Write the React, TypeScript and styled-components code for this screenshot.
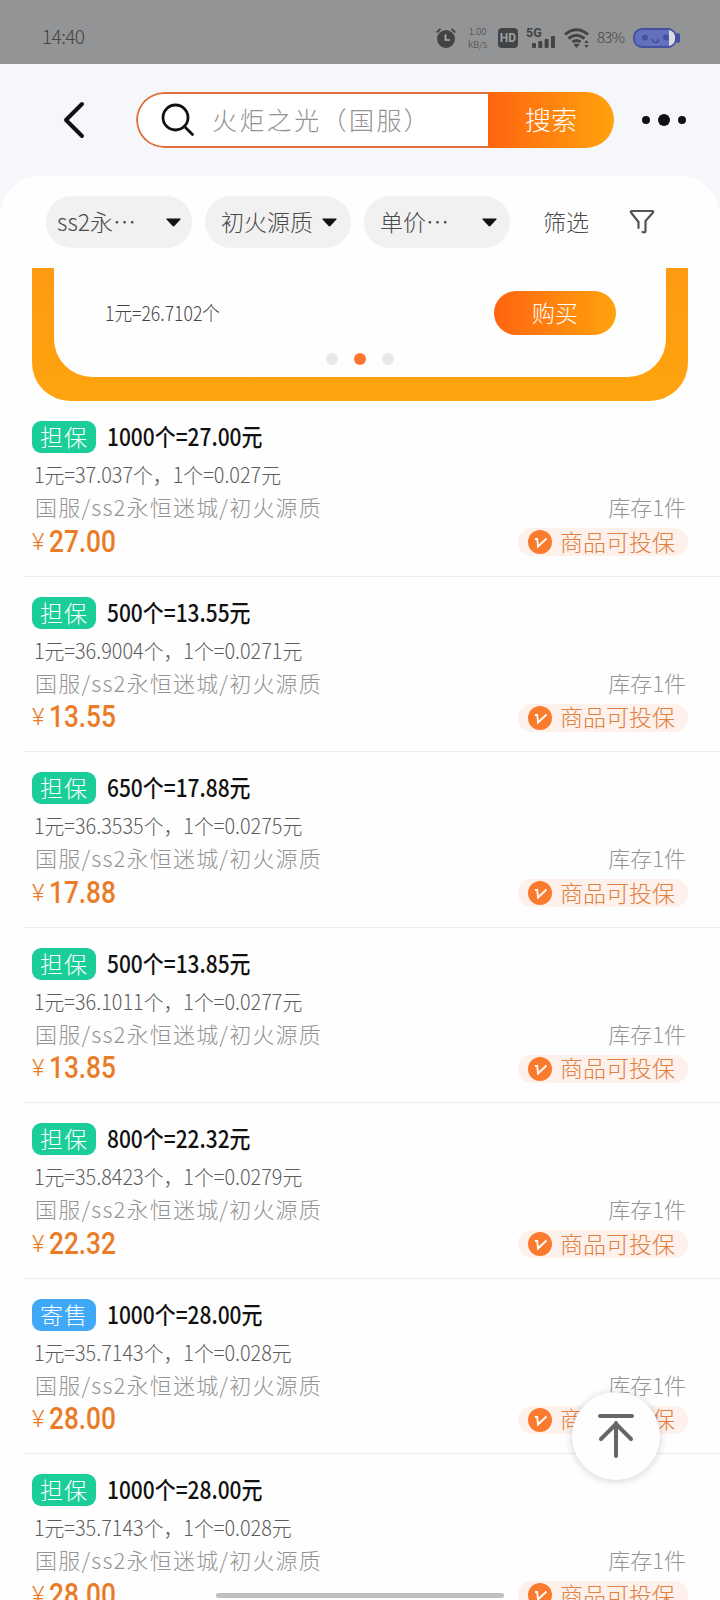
import React from 'react';
import styled, { createGlobalStyle } from 'styled-components';

const Global = createGlobalStyle`
  * { box-sizing: border-box; }
  html, body { margin: 0; padding: 0; background: #fefefe; overflow: hidden; }
  body { font-family: 'Noto Sans CJK SC', sans-serif; font-weight: 300; }
`;

const Screen = styled.div`
  position: relative;
  width: 720px;
  height: 1600px;
  overflow: hidden;
  background: #f5f7fb;
`;

const StatusBar = styled.div`
  height: 64px;
  background: #939495;
  color: #444;
  display: flex;
  align-items: center;
  padding: 12px 39px 0 42px;
`;
const Clock = styled.span`
  flex: 1;
  margin-top: -4px;
  font-size: 19px;
  line-height: 24px;
  letter-spacing: -0.6px;
`;
const StatusIcon = styled.svg<{ $gap: number }>`
  display: block;
  flex: none;
  margin-right: ${(p) => p.$gap}px;
`;
const Speed = styled.div`
  width: 21px;
  margin-right: 10px;
  font-size: 9.5px;
  line-height: 13px;
  text-align: center;
  white-space: nowrap;
`;
const HdBadge = styled.div`
  width: 20px;
  height: 20px;
  margin-right: 8px;
  border-radius: 4px;
  background: #424344;
  color: #a0a1a2;
  font: 700 12px/20px Roboto, sans-serif;
  text-align: center;
`;
const Signal = styled.div`
  display: flex;
  width: 30px;
  height: 20px;
  margin-right: 8px;
  font: 700 12.5px/10px Roboto, sans-serif;
`;
const Bars = styled.svg`
  flex: none;
  align-self: flex-end;
  margin-left: -10px;
`;
const Percent = styled.span`
  width: 27px;
  margin: -3px 9px 0 0;
  font-size: 15px;
  letter-spacing: -0.8px;
  white-space: nowrap;
`;

const Header = styled.header`
  height: 112px;
  display: flex;
  align-items: center;
  padding-left: 62px;
`;
const BackIcon = styled.svg`
  width: 24px;
  margin-right: 50px;
`;
const SearchBox = styled.div`
  display: flex;
  width: 478px;
  height: 56px;
  border-radius: 28px;
  overflow: hidden;
`;
const SearchField = styled.div`
  width: 352px;
  display: flex;
  align-items: center;
  padding: 0 0 2px 23px;
  border: 2px solid #e1703f;
  border-right: 0;
  border-radius: 28px 0 0 28px;
  background: #fff;
  color: #929292;
  font-size: 25px;
  letter-spacing: 2.4px;
  white-space: nowrap;
`;
const SearchIcon = styled.svg`
  flex: none;
  margin: 2px 17px 0 0;
`;
const SearchButton = styled.div`
  flex: 1;
  background: linear-gradient(90deg, #ff6411, #ffa30c);
  color: #fff;
  font-size: 26px;
  line-height: 54px;
  text-align: center;
`;
const MoreIcon = styled.svg`
  margin-left: 26px;
`;

const Sheet = styled.main`
  height: 1424px;
  border-radius: 40px 40px 0 0;
  background: #fefefe;
`;
const Filters = styled.div`
  height: 92px;
  display: flex;
  align-items: flex-start;
  padding: 20px 0 0 46px;
`;
const Pill = styled.div<{ $left: number; $right?: number }>`
  width: 146px;
  height: 52px;
  margin-right: 13px;
  padding: 0 ${(p) => p.$right ?? 11}px 0 ${(p) => p.$left}px;
  border-radius: 26px;
  background: #f1f1f1;
  color: #4a4a4a;
  display: flex;
  align-items: center;
  justify-content: space-between;
  font-size: 23px;
  line-height: 48px;
  white-space: nowrap;

  span {
    margin-top: -2px;
  }
`;
const FilterLink = styled.div`
  display: flex;
  align-items: center;
  height: 52px;
  padding-left: 20px;
  gap: 40px;
  color: #4a4a4a;
  font-size: 23px;

  span {
    margin-top: -2px;
  }
`;

const Banner = styled.section`
  height: 133px;
  margin: 0 32px;
  padding: 0 22px 24px;
  border-radius: 0 0 38px 38px;
  background: linear-gradient(#ff9b12, #ffa40e);
`;
const BannerCard = styled.div`
  height: 109px;
  padding: 23px 50px 0 51px;
  border-radius: 0 0 38px 38px;
  background: #fefefe;
`;
const BannerRow = styled.div`
  display: flex;
  align-items: center;
  justify-content: space-between;
  color: #444;
  font-size: 20px;
`;
const BannerRate = styled.span`
  margin-top: -2px;
  transform: scaleX(0.88);
  transform-origin: left;
`;
const BuyButton = styled.div`
  width: 122px;
  height: 44px;
  border-radius: 22px;
  background: linear-gradient(90deg, #ff6411, #ffa30c);
  color: #fff;
  font-size: 23px;
  line-height: 42px;
  text-align: center;
`;
const Dots = styled.div`
  display: flex;
  justify-content: center;
  gap: 16px;
  padding: 18px 1px 0 0;
`;
const Dot = styled.i<{ $active?: boolean }>`
  width: 12px;
  height: 12px;
  border-radius: 50%;
  background: ${(p) => (p.$active ? '#fa7530' : '#e8e8e8')};
`;

const Item = styled.article`
  height: 175.5px;
  margin-left: 24px;
  padding: 20px 32px 0 8px;
  border-bottom: 1.5px solid #ededed;
  white-space: nowrap;
`;
const TitleRow = styled.div`
  display: flex;
  align-items: center;
  height: 32px;
  gap: 11px;
`;
const Badge = styled.span<{ $blue?: boolean }>`
  width: 64px;
  height: 32px;
  border-radius: 9px;
  background: ${(p) => (p.$blue ? '#3fa9f8' : '#1bcd98')};
  color: #fff;
  font-size: 23px;
  line-height: 30px;
  letter-spacing: 1px;
  text-align: center;
`;
const Title = styled.span`
  margin-top: -2px;
  color: #111;
  font-size: 24px;
  line-height: 32px;
  font-weight: 500;
  transform: scaleX(0.872);
  transform-origin: left;
`;
const Rate = styled.div`
  height: 32px;
  margin-top: 5px;
  padding-left: 2px;
  color: #5b5b5b;
  font-size: 21px;
  line-height: 32px;
  transform: scaleX(0.945);
  transform-origin: left;
`;
const MetaRow = styled.div`
  display: flex;
  justify-content: space-between;
  height: 32px;
  padding: 0 2px 0 3px;
  color: #949494;
  font-size: 22px;
  line-height: 32px;
`;
const Category = styled.span`
  letter-spacing: 1.2px;
`;
const PriceRow = styled.div`
  display: flex;
  align-items: center;
  justify-content: space-between;
  height: 40px;
`;
const Price = styled.div`
  display: flex;
  align-items: baseline;
  gap: 5px;
  color: #ea7c28;
  font: 500 32px/38px Roboto, sans-serif;
`;
const Yen = styled.span`
  width: 12px;
  font-size: 24px;
  font-weight: 300;
  transform: translateY(-2px);
`;
const Amount = styled.span`
  transform: scaleX(0.82);
  transform-origin: left;
`;
const Insured = styled.div`
  display: flex;
  align-items: center;
  width: 170px;
  height: 28px;
  padding-left: 10px;
  gap: 8px;
  border-radius: 14px;
  background: #fef0ea;
  color: #df8142;
  font-size: 23px;
  line-height: 24px;

  span {
    margin-top: -3px;
  }
`;

const TopButton = styled.div`
  position: absolute;
  left: 572px;
  top: 1392px;
  width: 88px;
  height: 88px;
  border-radius: 50%;
  background: #fefefe;
  box-shadow: 0 1px 8px rgba(0, 0, 0, 0.18);
`;
const HomeBar = styled.div`
  position: absolute;
  left: 216px;
  top: 1593px;
  width: 288px;
  height: 5px;
  border-radius: 3px;
  background: #bfbfbf;
`;

const Caret = () => (
  <svg width="15" height="9" viewBox="0 0 15 9">
    <path d="M1 .5h13q1 0 .4.900L8.400 8q-.900.900-1.800 0L.600 1.400Q0 .5 1 .5z" fill="#111" />
  </svg>
);

type Listing = { amount: string; price: string; per: string; unit: string; consigned?: boolean };

const listings: Listing[] = [
  { amount: '1000', price: '27.00', per: '37.037', unit: '0.027' },
  { amount: '500', price: '13.55', per: '36.9004', unit: '0.0271' },
  { amount: '650', price: '17.88', per: '36.3535', unit: '0.0275' },
  { amount: '500', price: '13.85', per: '36.1011', unit: '0.0277' },
  { amount: '800', price: '22.32', per: '35.8423', unit: '0.0279' },
  { amount: '1000', price: '28.00', per: '35.7143', unit: '0.028', consigned: true },
  { amount: '1000', price: '28.00', per: '35.7143', unit: '0.028' },
];

const ListingItem = ({ amount, price, per, unit, consigned }: Listing) => (
  <Item>
    <TitleRow>
      <Badge $blue={consigned}>{consigned ? '寄售' : '担保'}</Badge>
      <Title>{`${amount}个=${price}元`}</Title>
    </TitleRow>
    <Rate>{`1元=${per}个，1个=${unit}元`}</Rate>
    <MetaRow>
      <Category>国服/ss2永恒迷城/初火源质</Category>
      <span>库存1件</span>
    </MetaRow>
    <PriceRow>
      <Price>
        <Yen>¥</Yen>
        <Amount>{price}</Amount>
      </Price>
      <Insured>
        <svg width="24" height="24" viewBox="0 0 24 24">
          <circle cx="12" cy="12" r="12" fill="#fa7b2d" />
          <path d="M7 9h2.200l.800 7.500L18.500 8.500" fill="none" stroke="#fff" strokeWidth="1.800" />
        </svg>
        <span>商品可投保</span>
      </Insured>
    </PriceRow>
  </Item>
);

export default function App() {
  return (
    <>
      <Global />
      <Screen>
        <StatusBar>
          <Clock>14:40</Clock>
          <StatusIcon $gap={11} width="20" height="20" viewBox="0 0 20 20">
            <circle cx="10" cy="11" r="9" fill="#424344" />
            <path d="M.7 4.500 4.500 1M19.300 4.500 15.500 1" stroke="#424344" strokeWidth="1.800" />
            <path d="M9.500 6.500V12h4.500" fill="none" stroke="#b0b0b0" strokeWidth="1.700" />
          </StatusIcon>
          <Speed>1.00<br />kB/s</Speed>
          <HdBadge>HD</HdBadge>
          <Signal>
            5G
            <Bars width="24" height="12" viewBox="0 0 24 12" fill="#424344">
              <rect x="0" y="7" width="4" height="5" rx="1" />
              <rect x="6.300" y="5" width="4" height="7" rx="1" />
              <rect x="12.600" y="3" width="4" height="9" rx="1" />
              <rect x="19" y="0" width="4" height="12" rx="1" />
            </Bars>
          </Signal>
          <StatusIcon $gap={8} width="25" height="20" viewBox="0 0 25 20">
            <path d="M1 6.500Q12.500-3 24 6.500M4.500 10.500q8-6.500 16 0M8.500 14q4-3 8 0" fill="none" stroke="#424344" strokeWidth="2.900" />
            <path d="M9.500 16.500q3-2 6 0l-3 3.500z" fill="#424344" />
            <path d="m22.500 12 2.200 3h-4.400zM22.500 20l-2.200-3h4.400z" fill="#424344" />
          </StatusIcon>
          <Percent>83%</Percent>
          <StatusIcon $gap={0} width="48" height="20" viewBox="0 0 48 20">
            <rect x="43" y="5" width="4" height="10" rx="2" fill="#4450a0" />
            <rect x="1" y="1" width="42" height="18" rx="8" fill="#6470bd" />
            <path d="M36 1q7 0 7 9t-7 9z" fill="#dcdde2" />
            <rect x="1" y="1" width="42" height="18" rx="8" fill="none" stroke="#4450a0" strokeWidth="1.800" />
            <circle cx="12" cy="9.500" r="3" fill="#4450a0" />
            <circle cx="33" cy="9.500" r="3" fill="#4450a0" />
            <path d="M19.500 11q0 3.500 3 3.500t3-3.500" fill="none" stroke="#4450a0" strokeWidth="1.700" />
          </StatusIcon>
        </StatusBar>

        <Header>
          <BackIcon height="40" viewBox="0 0 24 40">
            <path d="M20 4 4 20l16 16" fill="none" stroke="#111" strokeWidth="4" strokeLinecap="round" strokeLinejoin="round" />
          </BackIcon>
          <SearchBox>
            <SearchField>
              <SearchIcon width="34" height="34" viewBox="0 0 34 34">
                <circle cx="14.500" cy="14.500" r="12.500" fill="none" stroke="#111" strokeWidth="2.800" />
                <path d="m23.500 23.500 8 8" stroke="#111" strokeWidth="2.800" strokeLinecap="round" />
              </SearchIcon>
              火炬之光（国服）
            </SearchField>
            <SearchButton>搜索</SearchButton>
          </SearchBox>
          <MoreIcon width="48" height="14" viewBox="0 0 48 14" fill="#111">
            <circle cx="6" cy="7" r="4" />
            <circle cx="24" cy="7" r="6" />
            <circle cx="42" cy="7" r="4" />
          </MoreIcon>
        </Header>

        <Sheet>
          <Filters>
            <Pill $left={11}><span>ss2永⋯</span><Caret /></Pill>
            <Pill $left={16} $right={14}><span>初火源质</span><Caret /></Pill>
            <Pill $left={16} $right={13}><span>单价⋯</span><Caret /></Pill>
            <FilterLink>
              <span>筛选</span>
              <svg width="26" height="26" viewBox="0 0 26 26" fill="none" stroke="#555" strokeWidth="2.200" strokeLinecap="round" strokeLinejoin="round">
                <path d="M9.500 19v-6L2 3.500Q1 2 3 2h20q2 0 1 1.500L16.500 12v10q0 2-3 1" />
              </svg>
            </FilterLink>
          </Filters>

          <Banner>
            <BannerCard>
              <BannerRow>
                <BannerRate>1元=26.7102个</BannerRate>
                <BuyButton>购买</BuyButton>
              </BannerRow>
              <Dots>
                <Dot />
                <Dot $active />
                <Dot />
              </Dots>
            </BannerCard>
          </Banner>

          {listings.map((l, i) => (
            <ListingItem key={i} {...l} />
          ))}
        </Sheet>

        <TopButton>
          <svg width="88" height="88" viewBox="0 0 88 88" fill="none" stroke="#666" strokeWidth="4" strokeLinecap="round" strokeLinejoin="round">
            <path d="M28 24h32M44 64V31M29 47l15-15 15 15" />
          </svg>
        </TopButton>
        <HomeBar />
      </Screen>
    </>
  );
}
